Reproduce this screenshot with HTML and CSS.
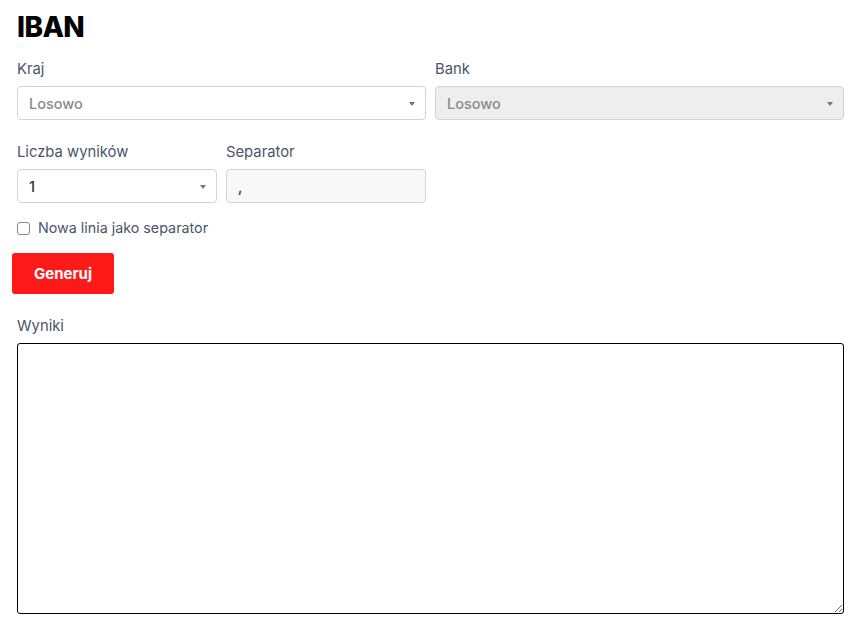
FILE: index.html
```html
<!DOCTYPE html>
<html lang="pl">
<head>
<meta charset="utf-8">
<title>IBAN</title>
<link rel="stylesheet" href="styles.css">
</head>
<body>
<main class="page">
  <h1 class="title">IBAN</h1>
  <div class="grid">
    <div class="field span2">
      <label class="label">Kraj</label>
      <div class="select"><span class="placeholder">Losowo</span><span class="caret"></span></div>
    </div>
    <div class="field span2">
      <label class="label">Bank</label>
      <div class="select disabled"><span class="placeholder">Losowo</span><span class="caret"></span></div>
    </div>
    <div class="field">
      <label class="label">Liczba wyników</label>
      <div class="select"><span class="value">1</span><span class="caret"></span></div>
    </div>
    <div class="field">
      <label class="label">Separator</label>
      <div class="input"><span class="value">,</span></div>
    </div>
  </div>
  <label class="check"><span class="box"></span><span>Nowa linia jako separator</span></label>
  <button class="btn">Generuj</button>
  <label class="label results-label">Wyniki</label>
  <textarea class="results"></textarea>
</main>
</body>
</html>
```
FILE: styles.css
```css
* { box-sizing: border-box; }
html, body { margin: 0; padding: 0; background: #fff; }
body { font-family: Inter, "Noto Sans", sans-serif; color: #4a5568; }
.page { padding: 8px 11px 0 17px; width: 855px; }
.title {
  margin: 0 0 14px 0;
  font-size: 28px;
  font-weight: 800;
  color: #000;
  letter-spacing: -0.6px;
  line-height: 38px;
}
.grid {
  display: grid;
  grid-template-columns: repeat(4, 200px);
  column-gap: 9px;
  row-gap: 23px;
}
.span2 { grid-column: span 2; }
.field { display: flex; flex-direction: column; }
.label {
  font-size: 14.8px;
  line-height: 18px;
  color: #4a5568;
  margin-bottom: 8px;
  display: block;
}
.select, .input {
  height: 34px;
  border: 1px solid #cfd4da;
  border-radius: 4px;
  display: flex;
  align-items: center;
  padding: 0 10px 0 11px;
  font-size: 14.5px;
  background: #fff;
}
.select { justify-content: space-between; }
.select.disabled { background: #eeeeee; }
.input { background: #f8f8f8; }
.placeholder { color: #8a8a8a; font-weight: 500; }
.value { color: #333; font-weight: 500; }
.caret {
  width: 0; height: 0;
  border-left: 3px solid transparent;
  border-right: 3px solid transparent;
  border-top: 4px solid #777;
  margin-top: 2px;
}
.check {
  display: flex;
  align-items: center;
  gap: 8px;
  margin-top: 16px;
  font-size: 14.3px;
  line-height: 18px;
  color: #4a5568;
}
.box {
  width: 13px; height: 13px;
  border: 1px solid #888;
  border-radius: 3px;
  background: #fff;
}
.btn {
  display: block;
  margin: 16px 0 0 -5px;
  width: 102px;
  height: 41px;
  background: #ff1a1a;
  color: #fff;
  border: none;
  border-radius: 3px;
  font-family: Inter, "Noto Sans", sans-serif;
  font-weight: 700;
  font-size: 15px;
}
.results-label { margin-top: 23px; margin-bottom: 8px; }
.results {
  display: block;
  width: 827px;
  height: 271px;
  border: 1px solid #000;
  border-radius: 3px;
  resize: vertical;
  font-family: Inter, sans-serif;
}
```
